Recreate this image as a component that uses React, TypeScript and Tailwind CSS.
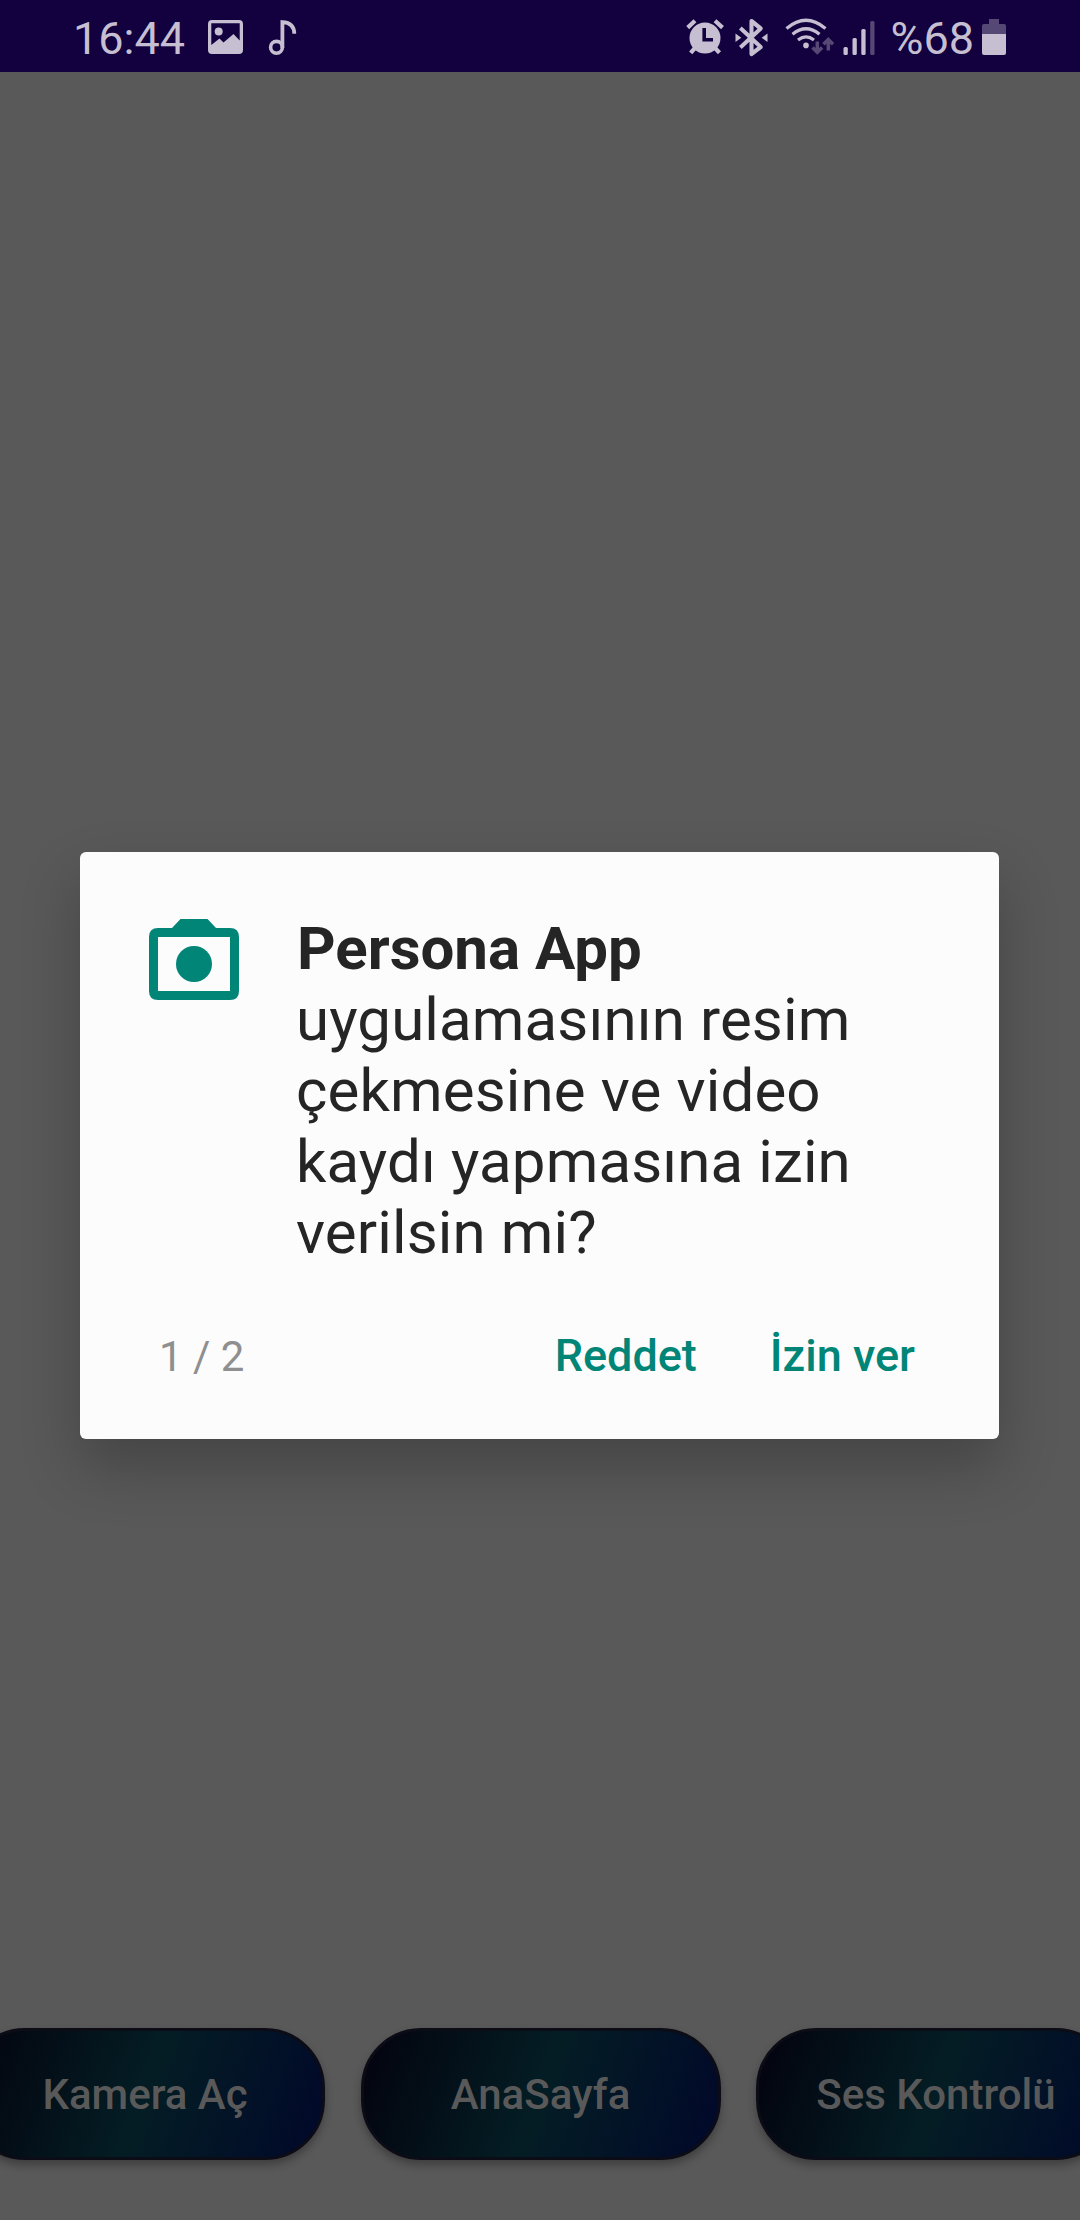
const INK = '#c5bfd1';
const FAINT = '#564875';

function PictureIcon() {
  return (
    <svg className="ml-[23px] h-[34px] w-[35px]" viewBox="0 0 35 34">
      <path
        fillRule="evenodd"
        fill={INK}
        d="M4 0H31Q35 0 35 4V30Q35 34 31 34H4Q0 34 0 30V4Q0 0 4 0ZM3.300 3.300V25L11.500 18.500L15.500 22.500L25.500 14L31.700 20.500V3.300Z"
      />
      <circle cx="10.700" cy="11.500" r="4" fill={INK} />
    </svg>
  );
}

function NoteIcon() {
  return (
    <svg className="mt-[2px] ml-[25px] h-[36px] w-[30px]" viewBox="0 0 30 36">
      <circle cx="8.500" cy="27.300" r="5.900" fill="none" stroke={INK} strokeWidth="3.600" />
      <path d="M14.400 28V2.100Q26.300 2.700 26.300 13.800" fill="none" stroke={INK} strokeWidth="3.800" />
    </svg>
  );
}

function AlarmIcon() {
  return (
    <svg className="h-[38px] w-[38px]" viewBox="0 0 38 38">
      <g stroke={INK} strokeWidth="4.200">
        <path d="M1.700 9.600L9 2.800M29 2.800L36.500 9.600M9 30L4.700 34.800M29 30L33.500 34.800" />
      </g>
      <circle cx="19" cy="20" r="15.500" fill={INK} />
      <path d="M18.200 10V21.700H27" fill="none" stroke="#13003f" strokeWidth="3.600" />
    </svg>
  );
}

function BluetoothIcon() {
  return (
    <svg className="mt-[1px] ml-[11px] h-[40px] w-[33px]" viewBox="0 0 34 40" preserveAspectRatio="none">
      <path
        d="M5.500 10L26.500 29L17 36V3L26.500 10.500L5.500 29.500"
        fill="none"
        stroke={INK}
        strokeWidth="4.200"
        strokeLinejoin="round"
      />
      <path d="M0.500 15.500L6.500 19.700L0.500 24ZM33.500 15.500V24L27.500 19.700Z" fill={INK} />
    </svg>
  );
}

function WifiIcon() {
  return (
    <svg className="ml-[17px] h-[40px] w-[49px]" viewBox="0 0 49 40">
      <g fill="none" stroke={INK} strokeWidth="3.200">
        <path d="M1.500 11.500Q21 -5 40.500 11.500" />
        <path d="M7.500 17.200Q21 6.300 34.500 17.200" />
        <path d="M13 23Q21 16.800 29 23" />
      </g>
      <circle cx="21" cy="28.400" r="2.800" fill={INK} />
      <g fill="none" stroke={FAINT} strokeWidth="3.500">
        <path d="M32.300 24.500V35M27.500 30.500L32.300 35.200L37.100 30.500" />
        <path d="M43.300 33.500V23M38.500 27.200L43.300 22.500L48.100 27.200" />
      </g>
    </svg>
  );
}

function SignalIcon() {
  return (
    <svg className="mt-[2px] ml-[9px] h-[34px] w-[32px]" viewBox="0 0 32 34">
      <rect x="0.500" y="26" width="4.300" height="8" rx="1.500" fill={INK} />
      <rect x="9.500" y="17" width="4.300" height="17" rx="1.500" fill={INK} />
      <rect x="18.300" y="8" width="4.300" height="26" rx="1.500" fill={INK} />
      <rect x="27.200" y="0" width="4.300" height="34" rx="1.500" fill={FAINT} />
    </svg>
  );
}

function BatteryIcon() {
  return (
    <svg className="h-[36px] w-[24px]" viewBox="0 0 24 36">
      <path d="M7 0H17V5H22Q24 5 24 7V15H0V7Q0 5 2 5H7Z" fill={FAINT} />
      <path d="M0 15H24V34Q24 36 22 36H2Q0 36 0 34Z" fill={INK} />
    </svg>
  );
}

function CameraIcon() {
  return (
    <svg className="mt-[67px] h-[81px] w-[90px]" viewBox="0 0 90 81" fill="#008577">
      <path
        fillRule="evenodd"
        d="M31.500 0H58.500L67 9H81Q90 9 90 18V72Q90 81 81 81H9Q0 81 0 72V18Q0 9 9 9H23ZM9 18V72H81V18Z"
      />
      <circle cx="45" cy="45" r="18" />
    </svg>
  );
}

function PillButton({ label }: { label: string }) {
  return (
    <button className="h-[132px] w-[360px] shrink-0 rounded-[60px] border-[3px] border-[#0b0c16] bg-[linear-gradient(110deg,#03030e_0%,#041d24_50%,#01082a_100%)] text-[42px] font-medium text-[#595959] shadow-[0_5px_9px_rgba(0,0,0,0.3)]">
      {label}
    </button>
  );
}

export default function App() {
  return (
    <div className="flex h-[2220px] w-[1080px] flex-col overflow-hidden bg-[#595959] font-['Roboto',sans-serif]">
      <header className="flex h-[72px] items-center bg-[#13003f] pt-[2px] pr-[74px] pl-[73px] text-[45px] leading-[52px] text-[#c5bfd1]">
        <span className="mt-1">16:44</span>
        <PictureIcon />
        <NoteIcon />
        <div className="ml-auto flex items-center">
          <AlarmIcon />
          <BluetoothIcon />
          <WifiIcon />
          <SignalIcon />
          <span className="mt-1 mr-2 ml-[15px]">%68</span>
          <BatteryIcon />
        </div>
      </header>

      <main className="px-20 pt-[780px]">
        <section className="flex h-[587px] w-[919px] flex-col rounded-[6px] bg-[#fcfcfc] shadow-[0_28px_60px_rgba(0,0,0,0.24)]">
          <div className="flex pl-[69px]">
            <CameraIcon />
            <p className="mt-[61px] ml-[57px] text-[60px] leading-[71px] tracking-[0.13px] text-[#252525]">
              <b className="pl-px font-bold tracking-normal">Persona App</b>
              <br />
              uygulamasının resim
              <br />
              çekmesine ve video
              <br />
              kaydı yapmasına izin
              <br />
              verilsin mi?
            </p>
          </div>
          <div className="mt-[52px] flex h-[72px] items-center pr-[84px] pl-[79px] text-[45px] font-medium text-[#008577]">
            <span className="mr-auto text-[42px] font-normal text-[#8f8f8f]">1 / 2</span>
            <button>Reddet</button>
            <button className="ml-[73px]">İzin ver</button>
          </div>
        </section>
      </main>

      <nav className="-ml-[35px] flex gap-[35.5px] pt-[589px]">
        <PillButton label="Kamera Aç" />
        <PillButton label="AnaSayfa" />
        <PillButton label="Ses Kontrolü" />
      </nav>
    </div>
  );
}
